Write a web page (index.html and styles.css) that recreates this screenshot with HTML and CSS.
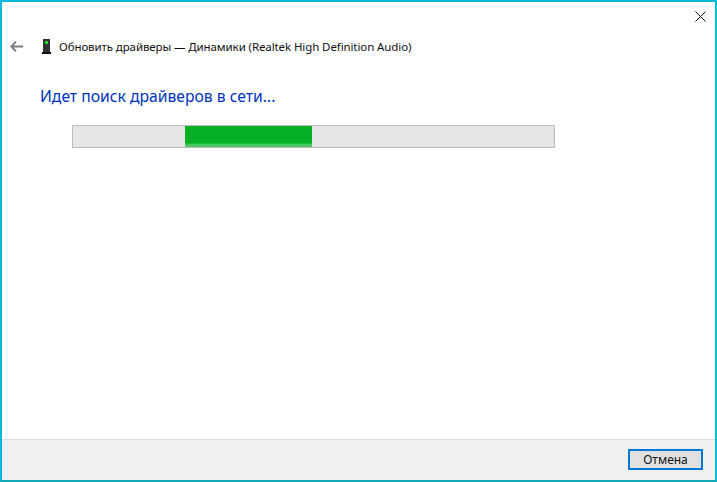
FILE: index.html
```html
<!DOCTYPE html>
<html lang="ru">
<head>
    <meta charset="UTF-8">
    <meta name="viewport" content="width=device-width, initial-scale=1.0">
    <title>Обновить драйверы</title>
    <link rel="stylesheet" href="styles.css">
</head>
<body>

<div class="window">
    <div class="titlebar">
        <button class="close" aria-label="Закрыть">
            <svg width="11" height="11" viewBox="0 0 11 11"><path d="M0.5 0.5L10.5 10.5M10.5 0.5L0.5 10.5" stroke="#111" stroke-width="1" fill="none"/></svg>
        </button>
    </div>
    <div class="main">
        <div class="header">
            <svg class="back" width="13" height="11" viewBox="0 0 13 11"><path d="M6 0.7L1.2 5.5L6 10.3M1.2 5.5H13" stroke="#7c7c7c" stroke-width="1.8" fill="none"/></svg>
            <svg class="device" width="9" height="15" viewBox="0 0 9 15">
                <rect x="1" y="0" width="7" height="13" fill="#333"/>
                <rect x="0" y="13" width="9" height="2" fill="#111"/>
                <rect x="3" y="2" width="3" height="3" fill="#22dd33"/>
            </svg>
            <span class="header-text">Обновить драйверы — Динамики (Realtek High Definition Audio)</span>
        </div>
        <h1 class="heading">Идет поиск драйверов в сети...</h1>
        <div class="progress">
            <div class="progress-bar"></div>
        </div>
    </div>
    <div class="footer">
        <button class="cancel">Отмена</button>
    </div>
</div>

</body>
</html>
```

FILE: styles.css
```css
html, body {
    margin: 0;
    height: 100%;
}
body {
    font-family: "Noto Sans", "Open Sans", sans-serif;
    background-color: #fff;
}
.window {
    box-sizing: border-box;
    height: 482px;
    display: flex;
    flex-direction: column;
    border: 2px solid #0bb7dc;
    border-bottom-color: #12a9b5;
    background-color: #fff;
}
.titlebar {
    display: flex;
    justify-content: flex-end;
    height: 29px;
}
.close {
    width: 46px;
    height: 28px;
    padding: 0;
    border: none;
    background: none;
}
.close svg {
    display: block;
    margin-left: 26px;
}
.main {
    flex: 1;
    padding: 0 0 0 7px;
}
.header {
    display: flex;
    align-items: center;
    height: 30px;
}
.back {
    margin-left: 1px;
}
.device {
    margin-left: 19px;
}
.header-text {
    margin-left: 8px;
    font-size: 11.5px;
    letter-spacing: -0.1px;
    color: #111;
}
.heading {
    margin: 24px 0 0 31px;
    font-size: 15.7px;
    font-weight: normal;
    line-height: 22px;
    color: #0033bc;
}
.progress {
    box-sizing: border-box;
    width: 483px;
    height: 23px;
    margin: 18px 0 0 63px;
    border: 1px solid #bcbcbc;
    background-color: #e6e6e6;
    overflow: hidden;
}
.progress-bar {
    width: 127px;
    height: 100%;
    margin-left: 112px;
    background: linear-gradient(to bottom, #06b025 0, #06b025 82%, #4cc863 86%, #4cc863 100%);
}
.footer {
    display: flex;
    justify-content: flex-end;
    align-items: flex-start;
    height: 41px;
    padding: 9px 12px 0 0;
    box-sizing: border-box;
    border-top: 1px solid #dfdfdf;
    background-color: #f0f0f0;
}
.cancel {
    box-sizing: border-box;
    width: 75px;
    height: 21px;
    padding: 0;
    border: 2px solid #0078d7;
    background-color: #e1e1e1;
    font-family: inherit;
    font-size: 12px;
    color: #111;
}
```
